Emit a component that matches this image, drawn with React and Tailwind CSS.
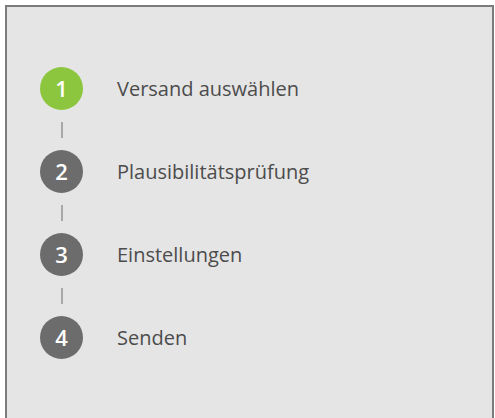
import React from "react";

const steps = [
  { n: 1, label: "Versand auswählen", active: true },
  { n: 2, label: "Plausibilitätsprüfung" },
  { n: 3, label: "Einstellungen" },
  { n: 4, label: "Senden" },
];

export default function App() {
  return (
    <div className="w-[495px] h-[418px] bg-white pt-[5px] pl-[5px] pr-[1px] overflow-hidden" style={{ fontFamily: '"Open Sans", "Noto Sans", sans-serif' }}>
      <div className="h-[430px] bg-[#e5e5e5] border-2 border-b-0 border-[#7c7c7c] pl-[33px] pt-[60px]">
        <div className="flex flex-col">
          {steps.map((s, i) => (
            <div key={s.n} className="flex flex-col">
              <div className="flex items-center">
                <div
                  className={
                    "w-[43px] h-[43px] rounded-full flex items-center justify-center text-white text-[22px] font-semibold " +
                    (s.active ? "bg-[#8cc63e]" : "bg-[#6c6c6c]")
                  }
                >
                  {s.n}
                </div>
                <div className="ml-[34px] text-[20px] leading-[26px] text-[#4c4c4c]">{s.label}</div>
              </div>
              {i < steps.length - 1 && (
                <div className="h-[40px] w-[43px] flex items-center justify-center">
                  <div className="w-[2px] h-[16px] bg-[#a8a8a8]" />
                </div>
              )}
            </div>
          ))}
        </div>
      </div>
    </div>
  );
}
